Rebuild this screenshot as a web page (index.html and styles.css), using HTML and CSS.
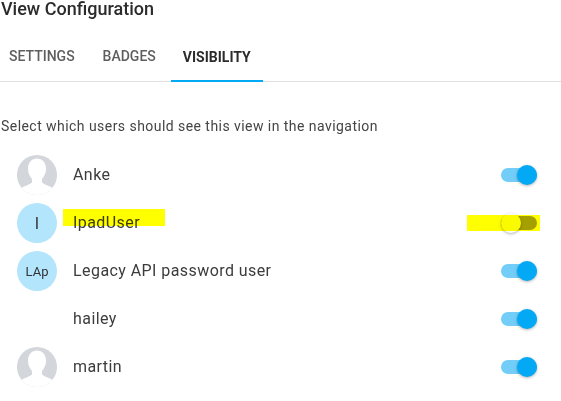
FILE: index.html
```html
<!DOCTYPE html>
<html lang="en">
<head>
    <meta charset="UTF-8">
    <title>View Configuration</title>
    <link rel="stylesheet" href="styles.css">
</head>
<body>
    <div class="dialog">
        <h1 class="title">View Configuration</h1>

        <div class="tabs">
            <div class="tab">SETTINGS</div>
            <div class="tab">BADGES</div>
            <div class="tab active">VISIBILITY</div>
        </div>

        <p class="intro">Select which users should see this view in the navigation</p>

        <div class="users">
            <div class="user">
                <div class="avatar photo">
                    <svg viewBox="0 0 40 40" width="40" height="40"><path class="silhouette" d="M20 3.500c-5 0-9 4-9 10 0 4 1.500 8 4 10.500v3.500c-2.500 2-7 3.500-11 5.500l3 8h26l3-8c-4-2-8.500-3.500-11-5.500v-3.500c2.500-2.500 4-6.500 4-10.500 0-6-4-10-9-10z"/></svg>
                </div>
                <div class="name">Anke</div>
                <div class="switch on"><span class="knob"></span></div>
            </div>
            <div class="user">
                <div class="avatar initials">I</div>
                <div class="name">IpadUser</div>
                <div class="switch off"><span class="knob"></span></div>
                <div class="marker marker-name"></div>
                <div class="marker marker-switch"></div>
            </div>
            <div class="user">
                <div class="avatar initials small">LAp</div>
                <div class="name">Legacy API password user</div>
                <div class="switch on"><span class="knob"></span></div>
            </div>
            <div class="user">
                <div class="avatar"></div>
                <div class="name">hailey</div>
                <div class="switch on"><span class="knob"></span></div>
            </div>
            <div class="user">
                <div class="avatar photo">
                    <svg viewBox="0 0 40 40" width="40" height="40"><path class="silhouette" d="M20 3.500c-5 0-9 4-9 10 0 4 1.500 8 4 10.500v3.500c-2.500 2-7 3.500-11 5.500l3 8h26l3-8c-4-2-8.500-3.500-11-5.500v-3.500c2.500-2.500 4-6.500 4-10.500 0-6-4-10-9-10z"/></svg>
                </div>
                <div class="name">martin</div>
                <div class="switch on"><span class="knob"></span></div>
            </div>
        </div>
    </div>
</body>
</html>
```

FILE: styles.css
```css
html, body {
    margin: 0;
    padding: 0;
    background: #fff;
}
body {
    font-family: Roboto, "Liberation Sans", sans-serif;
    color: #212121;
    overflow: hidden;
}
.dialog {
    width: 561px;
    height: 401px;
    overflow: hidden;
}
.title {
    margin: 0;
    padding-left: 1px;
    font-size: 18px;
    font-weight: 500;
    line-height: 18px;
    color: #2b2b2b;
}
.tabs {
    display: flex;
    height: 49px;
    margin-top: 14px;
    border-bottom: 1px solid #e0e0e0;
}
.tab {
    padding: 0 14px 0 9px;
    margin-right: 5px;
    font-size: 14px;
    font-weight: 500;
    line-height: 49px;
    color: #5e5e5e;
    box-sizing: border-box;
}
.tab.active {
    width: 92px;
    margin: 0 0 -1px -4px;
    padding: 1px 0 0 0;
    text-align: center;
    font-weight: 700;
    color: #2b2b2b;
    border-bottom: 2px solid #03a9f4;
}
.intro {
    margin: 35px 0 0 1px;
    font-size: 14px;
    line-height: 18px;
    letter-spacing: 0.45px;
    color: #444;
}
.users {
    margin-top: 16px;
}
.user {
    position: relative;
    display: flex;
    align-items: center;
    height: 48px;
    padding: 0 24px 0 17px;
}
.avatar {
    flex: none;
    width: 40px;
    height: 40px;
    border-radius: 50%;
    overflow: hidden;
    display: flex;
    align-items: center;
    justify-content: center;
    font-size: 16px;
    color: #333;
}
.avatar.photo {
    background: #d3d6da;
}
.silhouette {
    fill: #fff;
}
.avatar.initials {
    background: #b3e5fc;
}
.avatar.small {
    font-size: 13px;
}
.name {
    flex: 1;
    margin-left: 16px;
    padding-bottom: 2px;
    font-size: 16px;
    letter-spacing: 0.43px;
    color: #3c3c3c;
}
.switch {
    position: relative;
    width: 36px;
    height: 14px;
    border-radius: 7px;
}
.switch.on {
    background: #72cdf8;
}
.switch.off {
    background: #a5a000;
}
.knob {
    position: absolute;
    top: -3px;
    width: 20px;
    height: 20px;
    border-radius: 50%;
    box-shadow: 0 1px 3px rgba(0, 0, 0, 0.3);
}
.switch.on .knob {
    right: 0;
    background: #03a9f4;
}
.switch.off .knob {
    left: 0;
    background: #fafafa;
}
.marker {
    position: absolute;
    background: #ffff00;
    mix-blend-mode: multiply;
}
.marker-name {
    left: 63px;
    top: 10px;
    width: 102px;
    height: 17px;
}
.marker-switch {
    left: 467px;
    top: 16px;
    width: 73px;
    height: 16px;
}
```
